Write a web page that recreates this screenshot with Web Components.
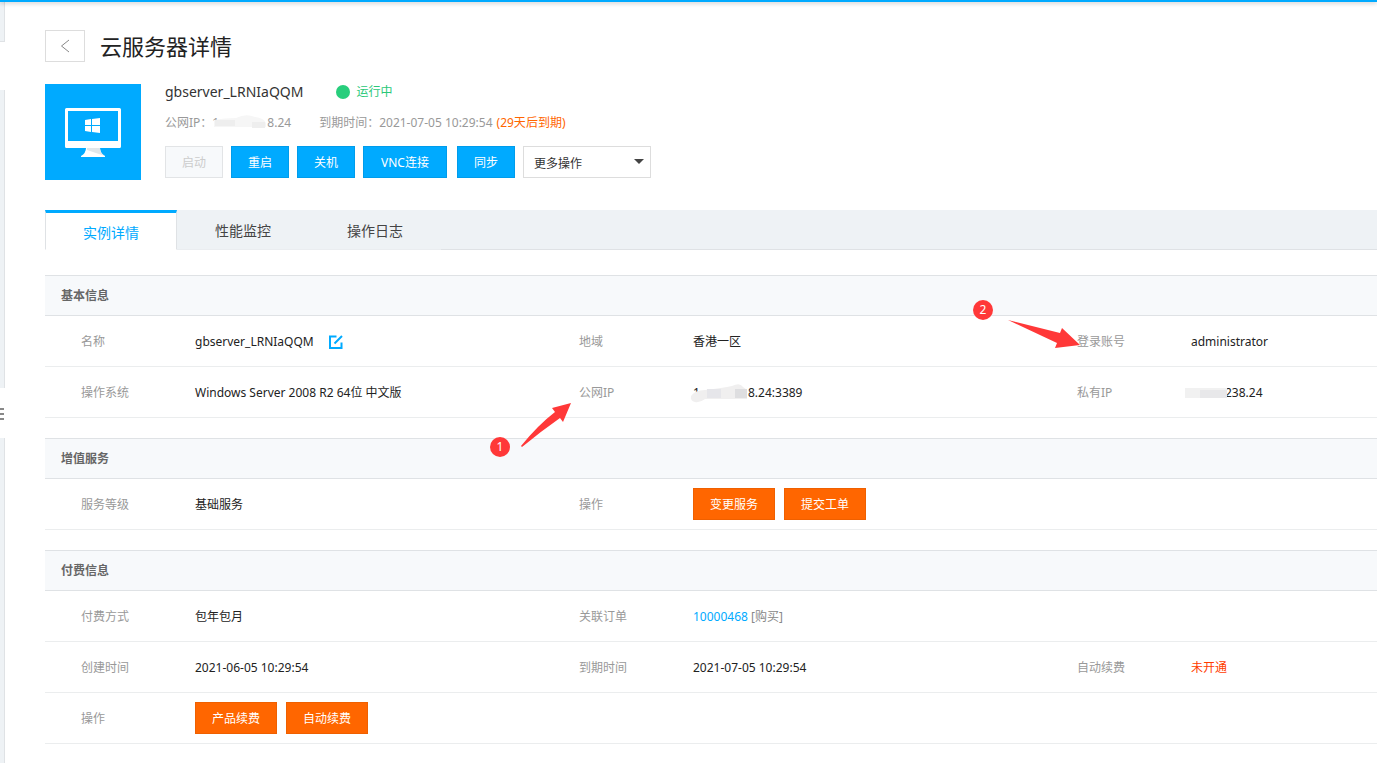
<!DOCTYPE html>
<html lang="zh-CN">
<head>
<meta charset="utf-8">
<title>云服务器详情</title>
<style>
  :root {
    --blue: #00aaff;
    --orange: #ff6600;
    --line: #ebedee;
    --rule: #dfe2e5;
    --panel: #f7f9fb;
    --bar: #eef2f5;
    --muted: #999;
  }
  html, body { height: 100%; }
  body {
    margin: 0;
    background: #fff;
    color: #222;
    overflow: hidden;
    font: 12px/20px "Noto Sans", "Noto Sans CJK SC", sans-serif;
  }
</style>
</head>
<body>
<console-page>
  <side-rail slot="rail"></side-rail>
  <page-title>云服务器详情</page-title>
  <server-summary></server-summary>
  <tab-bar></tab-bar>

  <info-section heading="基本信息">
    <info-row>
      <info-item label="名称">gbserver_LRNIaQQM<edit-button></edit-button></info-item>
      <info-item label="地域">香港一区</info-item>
      <info-item label="登录账号">administrator</info-item>
    </info-row>
    <info-row>
      <info-item label="操作系统">Windows Server 2008 R2 64位 中文版</info-item>
      <info-item label="公网IP"><masked-text kind="public">1</masked-text>8.24:3389</info-item>
      <info-item label="私有IP"><masked-text kind="private"></masked-text>238.24</info-item>
    </info-row>
  </info-section>

  <info-section heading="增值服务">
    <info-row>
      <info-item label="服务等级">基础服务</info-item>
      <info-item label="操作" actions><button-group wide><action-button tone="orange">变更服务</action-button><action-button tone="orange">提交工单</action-button></button-group></info-item>
    </info-row>
  </info-section>

  <info-section heading="付费信息">
    <info-row>
      <info-item label="付费方式">包年包月</info-item>
      <info-item label="关联订单"><order-link number="10000468">[购买]</order-link></info-item>
    </info-row>
    <info-row>
      <info-item label="创建时间">2021-06-05 10:29:54</info-item>
      <info-item label="到期时间">2021-07-05 10:29:54</info-item>
      <info-item label="自动续费" alert>未开通</info-item>
    </info-row>
    <info-row>
      <info-item label="操作" actions><button-group wide><action-button tone="orange">产品续费</action-button><action-button tone="orange">自动续费</action-button></button-group></info-item>
    </info-row>
  </info-section>

  <note-layer slot="notes"></note-layer>
</console-page>

<script>
  const define = (name, html, setup) => {
    const tpl = document.createElement('template');
    tpl.innerHTML = html;
    customElements.define(name, class extends HTMLElement {
      constructor() {
        super();
        this.attachShadow({ mode: 'open' }).append(tpl.content.cloneNode(true));
        if (setup) setup(this, this.shadowRoot);
      }
    });
  };

  define('console-page', `
    <style>
      :host { display: flex; flex-direction: column; min-height: 100%; position: relative; }
      header { height: 2px; background: var(--blue); box-shadow: 0 1px 4px rgba(0,0,0,.3); position: relative; z-index: 1; }
      .body { display: flex; flex: 1; }
      main { flex: 1; min-width: 0; padding: 28px 0 0 40px; }
    </style>
    <header></header>
    <div class="body">
      <slot name="rail"></slot>
      <main><slot></slot></main>
    </div>
    <slot name="notes"></slot>`);

  define('side-rail', `
    <style>
      :host { display: flex; flex-direction: column; width: 5px; }
      i { display: block; box-sizing: border-box; background: var(--bar); border-right: 1px solid var(--rule); }
      .first { height: 40px; border-bottom: 1px solid var(--rule); }
      .current { height: 48px; }
      .menu { height: 298px; }
      .rest { flex: 1; }
      button { box-sizing: border-box; display: flex; align-items: center; height: 50px; padding: 2px 0 0; border: 0; background: #fff; }
      svg { display: block; }
    </style>
    <i class="first"></i><div class="current"></div><i class="menu"></i>
    <button aria-label="收起菜单"><svg width="4" height="12"><path d="M0 1h4M0 6h4M0 11h4" stroke="#888" stroke-width="2"/></svg></button>
    <i class="rest"></i>`);

  define('page-title', `
    <style>
      :host { display: flex; align-items: center; gap: 15px; height: 32px; }
      button { box-sizing: border-box; width: 40px; height: 32px; padding: 0; border: 1px solid #ddd; background: #fff; display: grid; place-items: center; }
      h1 { margin: 0; font-size: 22px; line-height: 32px; font-weight: 400; color: #222; }
    </style>
    <button aria-label="返回"><svg width="10" height="14" viewBox="0 0 10 14"><path d="M9 1 1.5 7 9 13" fill="none" stroke="#888"/></svg></button>
    <h1><slot></slot></h1>`);

  define('action-button', `
    <style>
      :host { display: block; }
      button { display: block; box-sizing: border-box; height: 32px; padding: 2px 16px 0; border: 1px solid #009ceb; background: var(--blue); color: #fff; font: inherit; line-height: 28px; white-space: nowrap; }
      :host([wide]) button { padding: 2px 17px 0; }
      :host([tone="orange"]) button { border-color: #ef6000; background: var(--orange); }
      button:disabled { border-color: #e2e4e6; background: var(--panel); color: #ccc; }
    </style>
    <button><slot></slot></button>`,
    (el, root) => { root.querySelector('button').disabled = el.hasAttribute('disabled'); });

  define('button-group', `
    <style>
      :host { display: flex; gap: 8px; }
      :host([wide]) { gap: 9px; }
    </style><slot></slot>`);

  define('edit-button', `
    <style>
      :host { display: block; margin-left: 15px; }
      button { display: block; border: 0; padding: 0; background: none; }
      svg { display: block; }
    </style>
    <button aria-label="修改名称"><svg width="14" height="14" viewBox="0 0 14 14"><path d="M7.5 1.5H1V13h11.5V7.500M5.500 8.500 13 1" fill="none" stroke="#00aaff" stroke-width="2"/></svg></button>`);

  const smudges = {
    summary: [55, '<path d="M2 5Q12 3 24 3Q34-2 43 2Q52 3 54 8V12H2Z" fill="#f6f6f6"/><path d="M3 5h20v6H3zM40 7h13v6H40z" fill="#eee"/>'],
    public: [55, '<path d="M12 5Q30 3 39 1Q47-3 50 2L54 5V14H12Q7 18 2 17Q-3 16-2 11Q2 5 12 5Z" fill="#f0efef"/><path d="M14 4h14v9H14z" fill="#e6e6ea"/><path d="M42 4h12v9H42z" fill="#dedee0"/>'],
    private: [34, '<path d="M-6 3H36V13H-6z" fill="#f1f1f1"/><path d="M9 5H36V13H9z" fill="#e8e8ea"/>']
  };
  define('masked-text', `
    <style>
      :host { display: block; position: relative; height: 20px; line-height: 20px; }
      svg { position: absolute; left: 0; top: 2px; overflow: visible; }
    </style>
    <slot></slot><svg height="16" aria-hidden="true"></svg>`,
    (el, root) => {
      const [width, shape] = smudges[el.getAttribute('kind')];
      const svg = root.querySelector('svg');
      svg.setAttribute('width', width);
      svg.innerHTML = shape;
      const box = document.createElement('style');
      box.textContent = ':host { width: ' + width + 'px; }';
      root.append(box);
    });

  define('order-link', `
    <style>
      :host { display: block; color: #888; }
      a { color: var(--blue); text-decoration: none; }
    </style>
    <a href="#order"></a> <slot></slot>`,
    (el, root) => { root.querySelector('a').textContent = el.getAttribute('number'); });

  define('server-summary', `
    <style>
      :host { display: flex; gap: 24px; margin-top: 22px; height: 96px; }
      .logo { display: block; flex: none; }
      .name { display: flex; align-items: center; height: 16px; gap: 33px; font-size: 14px; color: #333; }
      .state { display: flex; align-items: center; gap: 6px; font-size: 12px; color: #2ac878; }
      .state::before { content: ""; width: 14px; height: 14px; border-radius: 50%; background: #28ce7c; }
      .meta { display: flex; gap: 28px; height: 20px; margin: 13px 0; color: var(--muted); }
      .meta span { display: flex; }
      b { font-weight: 400; color: var(--orange); margin-left: 4px; }
      .actions { display: flex; gap: 10px; }
      .more { position: relative; }
      .more::after { content: ""; position: absolute; right: 7px; top: 13px; border: 5px solid transparent; border-top-color: #444; border-bottom: 0; pointer-events: none; }
      select { appearance: none; box-sizing: border-box; display: block; width: 128px; height: 32px; padding: 3px 10px 0; border: 1px solid #ddd; border-radius: 0; background: #fff; font: inherit; color: #333; }
    </style>
    <svg class="logo" width="96" height="96" viewBox="0 0 96 96">
      <path fill="#00aaff" d="M0 0h96v96H0z"/>
      <path fill="#fff" fill-rule="evenodd" d="M21.500 24h53q1.500 0 1.500 1.500v37q0 1.500-1.500 1.500h-53q-1.500 0-1.500-1.500v-37q0-1.500 1.500-1.500ZM23 27v30h50V27Z"/>
      <path fill="#fff" d="M41 64h14q0 5 5 8v1H36v-1q5-3 5-8Z"/>
      <path fill="#e2e7ea" d="M42 64h13q0 5 5 8L42 66Z"/>
      <path fill="#fff" d="m40 36 6-1v6h-6ZM47 35l8-1v7h-8ZM40 42h6v6l-6-1ZM47 42h8v7l-8-1Z"/>
    </svg>
    <div>
      <div class="name">gbserver_LRNIaQQM<span class="state">运行中</span></div>
      <div class="meta">
        <span>公网IP：<masked-text kind="summary">1</masked-text>8.24</span>
        <span>到期时间：2021-07-05 10:29:54<b>(29天后到期)</b></span>
      </div>
      <div class="actions">
        <button-group>
          <action-button disabled>启动</action-button>
          <action-button>重启</action-button>
          <action-button>关机</action-button>
          <action-button wide>VNC连接</action-button>
        </button-group>
        <button-group>
          <action-button>同步</action-button>
          <div class="more"><select aria-label="更多操作"><option>更多操作</option></select></div>
        </button-group>
      </div>
    </div>`);

  define('tab-bar', `
    <style>
      :host { display: flex; box-sizing: border-box; height: 40px; margin: 30px 0 25px; background: var(--bar); box-shadow: inset 0 -1px var(--rule); }
      button { box-sizing: border-box; width: 132px; height: 40px; padding: 3px 0 0; border: 0; border-bottom: 1px solid #eaedf0; background: var(--bar); font: inherit; font-size: 14px; line-height: 20px; color: #444; }
      .on { padding: 4px 0 0; background: #fff; color: var(--blue); border: 1px solid var(--rule); border-top: 3px solid var(--blue); border-bottom-color: #fff; }
    </style>
    <button class="on">实例详情</button><button>性能监控</button><button>操作日志</button>`);

  define('info-section', `
    <style>
      :host { display: block; margin-bottom: 20px; }
      h2 { box-sizing: border-box; height: 41px; margin: 0; padding-left: 16px; border: 1px solid var(--rule); border-width: 1px 0; background: var(--panel); font-size: 12px; line-height: 39px; font-weight: 700; color: #666; }
    </style>
    <h2></h2><slot></slot>`,
    (el, root) => { root.querySelector('h2').textContent = el.getAttribute('heading'); });

  define('info-row', `
    <style>
      :host { display: grid; grid-template-columns: 83fr 83fr 56fr; height: 50px; border-bottom: 1px solid var(--line); }
    </style><slot></slot>`);

  define('info-item', `
    <style>
      :host { display: block; min-width: 0; }
      dl { display: flex; align-items: center; height: 100%; margin: 0; padding-left: 36px; white-space: nowrap; }
      dt { flex: none; width: 114px; padding-top: 2px; color: var(--muted); }
      dd { display: flex; align-items: center; margin: 0; padding-top: 2px; }
      :host([actions]) dd { padding-top: 0; }
      :host([alert]) dd { color: #ff3c00; }
    </style>
    <dl><dt></dt><dd><slot></slot></dd></dl>`,
    (el, root) => { root.querySelector('dt').textContent = el.getAttribute('label'); });

  define('note-layer', `
    <style>
      :host { position: absolute; inset: 0; pointer-events: none; z-index: 2; }
      svg { position: absolute; left: 0; top: 0; overflow: visible; }
      span { position: absolute; width: 20px; height: 20px; border-radius: 50%; background: #ff3838; color: #fff; text-align: center; font-size: 12px; line-height: 20px; }
      .one { left: 490px; top: 437px; }
      .two { left: 973px; top: 300px; }
    </style>
    <svg width="1" height="1" fill="#ff3838" aria-hidden="true">
      <path d="M571 403 552 408 555 412Q538 425 521 446L522 447Q540 432 560 418L563 422Z"/>
      <path d="M1008 320 1060 333 1062 328 1080 345 1055 348 1057 343Z"/>
    </svg>
    <span class="one">1</span><span class="two">2</span>`);
</script>
</body>
</html>
